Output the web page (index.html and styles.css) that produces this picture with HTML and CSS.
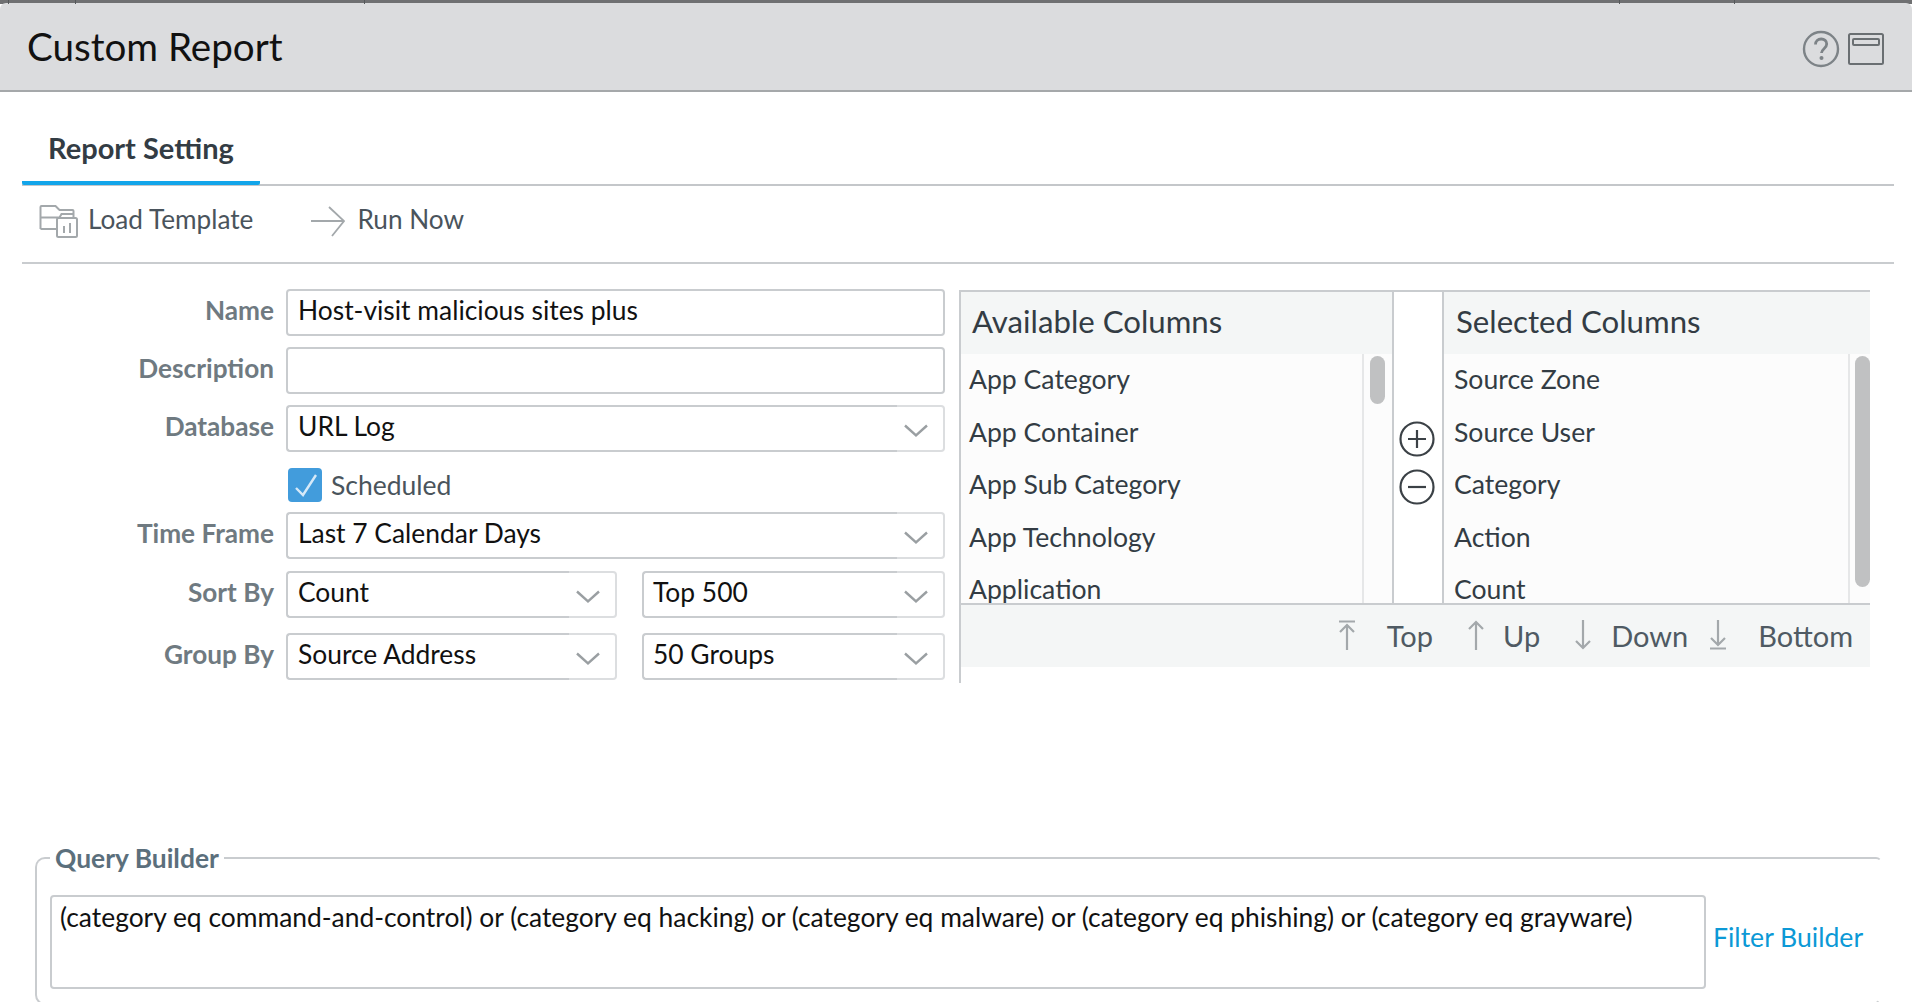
FILE: index.html
```html
<!DOCTYPE html>
<html lang="en">
<head>
  <meta charset="UTF-8" />
  <title>Custom Report</title>
  <link rel="stylesheet" href="styles.css">
</head>
<body>

  <div class="backdrop">
    <span class="seg seg-a"></span>
    <span class="seg seg-b"></span>
    <span class="seg seg-c"></span>
    <span class="seg seg-d"></span>
    <span class="seg seg-e"></span>
  </div>

  <header class="title-bar">
    <h1>Custom Report</h1>
    <div class="title-tools">
      <svg class="help-icon" width="38" height="38" viewBox="0 0 38 38">
        <circle cx="19" cy="19" r="17" fill="none" stroke="#7d8387" stroke-width="2.400"/>
        <path d="M13.500 14.500c0-3.500 2.500-5.500 5.700-5.500 3.200 0 5.500 2 5.500 5 0 4.500-5.200 4.800-5.200 9" fill="none" stroke="#7d8387" stroke-width="2.800"/>
        <circle cx="19.500" cy="28" r="2" fill="#7d8387"/>
      </svg>
      <svg class="window-icon" width="36" height="32" viewBox="0 0 36 32">
        <rect x="1" y="1" width="34" height="30" rx="1.500" fill="none" stroke="#6a6f72" stroke-width="2"/>
        <rect x="5" y="6" width="26" height="6" rx="1" fill="none" stroke="#6a6f72" stroke-width="2"/>
      </svg>
    </div>
  </header>

  <nav class="tabs">
    <a class="tab active">Report Setting</a>
  </nav>

  <div class="toolbar">
    <a class="tool tool-load">
      <svg width="40" height="34" viewBox="0 0 40 34">
        <path d="M1.500 25V3q0-1 1-1h14l4 4h13q1 0 1 1v7" fill="none" stroke="#a3a8ab" stroke-width="2"/>
        <path d="M1.500 13.500h19l2-3.500h12" fill="none" stroke="#a3a8ab" stroke-width="2"/>
        <path d="M1.500 25h16" fill="none" stroke="#a3a8ab" stroke-width="2"/>
        <rect x="18" y="14" width="20" height="19" rx="1.500" fill="#fff" stroke="#a3a8ab" stroke-width="2"/>
        <path d="M25 22v7M31 19v10" stroke="#a3a8ab" stroke-width="2"/>
      </svg>
      Load Template
    </a>
    <a class="tool tool-run">
      <svg width="36" height="32" viewBox="0 0 36 32">
        <path d="M1 16h33M19 2l15 14-12 15" fill="none" stroke="#a3a8ab" stroke-width="1.800"/>
      </svg>
      Run Now
    </a>
  </div>

  <main class="settings">
    <form class="report-form">
      <label class="field-label">Name</label>
      <div class="text-box">Host-visit malicious sites plus</div>

      <label class="field-label">Description</label>
      <div class="text-box"></div>

      <label class="field-label">Database</label>
      <div class="select">
        <div class="select-value">URL Log</div>
        <div class="select-arrow"><svg width="24" height="14" viewBox="0 0 24 14"><path d="M1 1.500l11 10 11-10" fill="none" stroke="#9a9fa2" stroke-width="2.400"/></svg></div>
      </div>

      <span></span>
      <div class="check-row">
        <span class="checkbox"><svg width="34" height="34" viewBox="0 0 34 34"><path d="M8 20l7 7L28 7" fill="none" stroke="#d6e9f8" stroke-width="2.400"/></svg></span>
        Scheduled
      </div>

      <label class="field-label">Time Frame</label>
      <div class="select">
        <div class="select-value">Last 7 Calendar Days</div>
        <div class="select-arrow"><svg width="24" height="14" viewBox="0 0 24 14"><path d="M1 1.500l11 10 11-10" fill="none" stroke="#9a9fa2" stroke-width="2.400"/></svg></div>
      </div>

      <label class="field-label">Sort By</label>
      <div class="select-pair">
        <div class="select">
          <div class="select-value">Count</div>
          <div class="select-arrow"><svg width="24" height="14" viewBox="0 0 24 14"><path d="M1 1.500l11 10 11-10" fill="none" stroke="#9a9fa2" stroke-width="2.400"/></svg></div>
        </div>
        <div class="select">
          <div class="select-value">Top 500</div>
          <div class="select-arrow"><svg width="24" height="14" viewBox="0 0 24 14"><path d="M1 1.500l11 10 11-10" fill="none" stroke="#9a9fa2" stroke-width="2.400"/></svg></div>
        </div>
      </div>

      <label class="field-label">Group By</label>
      <div class="select-pair">
        <div class="select">
          <div class="select-value">Source Address</div>
          <div class="select-arrow"><svg width="24" height="14" viewBox="0 0 24 14"><path d="M1 1.500l11 10 11-10" fill="none" stroke="#9a9fa2" stroke-width="2.400"/></svg></div>
        </div>
        <div class="select">
          <div class="select-value">50 Groups</div>
          <div class="select-arrow"><svg width="24" height="14" viewBox="0 0 24 14"><path d="M1 1.500l11 10 11-10" fill="none" stroke="#9a9fa2" stroke-width="2.400"/></svg></div>
        </div>
      </div>
    </form>

    <section class="columns">
      <div class="columns-main">
        <div class="col col-available">
          <h2>Available Columns</h2>
          <div class="col-body">
            <ul>
              <li>App Category</li>
              <li>App Container</li>
              <li>App Sub Category</li>
              <li>App Technology</li>
              <li>Application</li>
            </ul>
            <div class="scroll-track"><div class="thumb thumb-short"></div></div>
          </div>
        </div>

        <div class="col-actions">
          <svg width="36" height="36" viewBox="0 0 36 36">
            <circle cx="18" cy="18" r="16.500" fill="none" stroke="#3b4146" stroke-width="2.200"/>
            <path d="M18 9v18M9 18h18" stroke="#3b4146" stroke-width="2.200"/>
          </svg>
          <svg width="36" height="36" viewBox="0 0 36 36">
            <circle cx="18" cy="18" r="16.500" fill="none" stroke="#3b4146" stroke-width="2.200"/>
            <path d="M9 18h18" stroke="#3b4146" stroke-width="2.200"/>
          </svg>
        </div>

        <div class="col col-selected">
          <h2>Selected Columns</h2>
          <div class="col-body">
            <ul>
              <li>Source Zone</li>
              <li>Source User</li>
              <li>Category</li>
              <li>Action</li>
              <li>Count</li>
            </ul>
            <div class="scroll-track"><div class="thumb thumb-long"></div></div>
          </div>
        </div>
      </div>

      <div class="columns-foot">
        <a class="move move-top">
          <svg width="20" height="30" viewBox="0 0 20 30"><path d="M2 1.500h16M10 30V5M3 12l7-7 7 7" fill="none" stroke="#a3a8ab" stroke-width="2.200"/></svg>
          Top
        </a>
        <a class="move move-up">
          <svg width="18" height="30" viewBox="0 0 18 30"><path d="M9 30V2M2 9l7-7 7 7" fill="none" stroke="#a3a8ab" stroke-width="2.200"/></svg>
          Up
        </a>
        <a class="move move-down">
          <svg width="18" height="30" viewBox="0 0 18 30"><path d="M9 0v28M2 21l7 7 7-7" fill="none" stroke="#a3a8ab" stroke-width="2.200"/></svg>
          Down
        </a>
        <a class="move move-bottom">
          <svg width="20" height="30" viewBox="0 0 20 30"><path d="M10 0v25M3 18l7 7 7-7M2 28.500h16" fill="none" stroke="#a3a8ab" stroke-width="2.200"/></svg>
          Bottom
        </a>
      </div>
    </section>
  </main>

  <fieldset class="query-builder">
    <legend>Query Builder</legend>
    <div class="query-row">
      <div class="query-box">(category eq command-and-control) or (category eq hacking) or (category eq malware) or (category eq phishing) or (category eq grayware)</div>
      <a class="filter-link">Filter Builder</a>
    </div>
  </fieldset>

</body>
</html>
```

FILE: styles.css
```css
* {
  box-sizing: border-box;
}

html, body {
  height: 1002px;
  overflow: hidden;
}

body {
  margin: 0;
  font-family: Lato, "Open Sans", sans-serif;
  background-color: #fff;
  color: #111;
}

/* strip of the page behind the dialog */
.backdrop {
  display: flex;
  height: 4px;
  background-color: #6f7072;
}

.seg {
  height: 4px;
  border-right: 1px solid #55585a;
}

.seg-a { width: 9px; }
.seg-b { width: 67px; }
.seg-c { width: 289px; }
.seg-d { width: 1255px; }
.seg-e { width: 115px; }

.title-bar {
  display: flex;
  align-items: center;
  justify-content: space-between;
  height: 89px;
  margin-top: -1px;
  padding: 0 27px 2px;
  background-color: #dbdcde;
  border-bottom: 2px solid #a5a8aa;
  border-radius: 6px 6px 0 0;
}

h1 {
  margin: 0;
  font-size: 38.6px;
  font-weight: 400;
  color: #111;
}

.title-tools {
  display: flex;
  align-items: flex-start;
  gap: 8px;
  margin-top: 6px;
  margin-right: 1px;
}

.window-icon {
  margin-top: 3px;
}

.tabs {
  display: flex;
  height: 94px;
  margin: 0 18px 0 22px;
  border-bottom: 2px solid #c4c7ca;
}

.tab {
  display: flex;
  align-items: center;
  width: 238px;
  height: 93px;
  padding: 22px 0 0 26px;
  font-size: 29px;
  font-weight: 700;
  color: #333c44;
  border-bottom: 4px solid #12a5ea;
  border-radius: 0 0 2px 2px;
}

.toolbar {
  display: flex;
  align-items: center;
  height: 78px;
  margin: 0 18px 0 22px;
  padding: 0 0 10px 17px;
  border-bottom: 2px solid #c9cccf;
  font-size: 26.2px;
  color: #4a545c;
}

.tool {
  display: flex;
  align-items: center;
}

.tool-load svg {
  margin-top: 3px;
  margin-right: 9px;
}

.tool-run {
  margin-left: 57px;
}

.tool-run svg {
  margin-top: 4px;
  margin-right: 11px;
}

.settings {
  display: flex;
  align-items: flex-start;
  padding-top: 25px;
  height: 418px;
}

.report-form {
  display: grid;
  grid-template-columns: 274px 659px;
  grid-template-rows: 58px 58px 64px 43px 59px 62px 47px;
  column-gap: 12px;
  flex: none;
  width: 945px;
}

.field-label {
  height: 47px;
  line-height: 43px;
  text-align: right;
  font-size: 26.2px;
  font-weight: 700;
  color: #6f7a81;
}

.text-box,
.select-value {
  height: 47px;
  padding: 0 10px;
  line-height: 39px;
  font-size: 26.4px;
  color: #111;
  background-color: #fff;
  border: 2px solid #c9cccf;
  border-radius: 4px;
}

.select {
  display: flex;
  height: 47px;
}

.select-value {
  flex: 1;
  min-width: 0;
  border-right: none;
  border-radius: 4px 0 0 4px;
}

.select + .select .select-value {
  padding-left: 9px;
}

.select-arrow {
  display: flex;
  align-items: center;
  justify-content: center;
  flex: none;
  width: 48px;
  height: 47px;
  padding: 4px 9px 0 0;
  border: 2px solid #dcdee0;
  border-left: none;
  border-radius: 0 4px 4px 0;
}

.select-pair {
  display: grid;
  grid-template-columns: 331px 303px;
  column-gap: 25px;
}

.check-row {
  display: flex;
  align-items: center;
  gap: 9px;
  height: 34px;
  margin-top: -1px;
  margin-left: 2px;
  font-size: 26.5px;
  color: #4a545c;
}

.checkbox {
  display: block;
  width: 34px;
  height: 34px;
  background-color: #429cdc;
  border-radius: 4px;
}

.checkbox svg {
  display: block;
}

.columns {
  flex: none;
  width: 911px;
  height: 393px;
  margin-left: 14px;
  margin-top: 1px;
  border-left: 2px solid #c9cccf;
}

.columns-main {
  display: flex;
  height: 315px;
  border-top: 2px solid #c9cccf;
  border-bottom: 2px solid #c9cccf;
}

.col {
  display: flex;
  flex-direction: column;
}

.col-available {
  width: 431px;
}

.col-selected {
  flex: 1;
  min-width: 0;
}

.col h2 {
  flex: none;
  height: 62px;
  margin: 0;
  padding-left: 11px;
  line-height: 59px;
  font-size: 31.2px;
  font-weight: 400;
  color: #333c44;
  background-color: #f4f6f6;
}

.col-selected h2 {
  padding-left: 12px;
}

.col-body {
  display: flex;
  height: 249px;
  overflow: hidden;
  background-color: #fcfcfc;
}

.col-body ul {
  flex: 1;
  margin: 0;
  padding: 0 0 0 8px;
  list-style: none;
}

.col-selected ul {
  padding-left: 10px;
}

.col-body li {
  height: 52.500px;
  line-height: 50px;
  font-size: 26.6px;
  color: #333c44;
  white-space: nowrap;
}

.scroll-track {
  flex: none;
  width: 30px;
  padding: 2px 9px 0 6px;
  border-left: 2px solid #e6e7e8;
}

.col-selected .scroll-track {
  width: 22px;
  padding-left: 5px;
  padding-right: 0;
}

.thumb {
  width: 15px;
  background-color: #c0c1c2;
  border-radius: 8px;
}

.thumb-short { height: 48px; }
.thumb-long { height: 231px; }

.col-actions {
  display: flex;
  flex-direction: column;
  align-items: center;
  gap: 12px;
  flex: none;
  width: 52px;
  padding-top: 129px;
  border-left: 2px solid #c9cccf;
  border-right: 2px solid #c9cccf;
}

.col-actions svg {
  display: block;
  margin-left: -3px;
}

.columns-foot {
  display: flex;
  align-items: center;
  justify-content: flex-end;
  height: 62px;
  padding: 0 17px 2px 0;
  font-size: 29px;
  color: #4f5a63;
  background-color: #f4f6f6;
}

.move {
  display: flex;
  align-items: center;
}

.move-top svg { margin-right: 30px; }
.move-up { margin-left: 34px; }
.move-up svg { margin-right: 18px; }
.move-down { margin-left: 34px; }
.move-down svg { margin-right: 19px; }
.move-bottom { margin-left: 20px; }
.move-bottom svg { margin-right: 30px; }

.query-builder {
  display: block;
  height: 163px;
  margin: 160px 30px 0 35px;
  padding: 0;
  min-width: 0;
  border: 2px solid #c9cccf;
  border-right-color: transparent;
  border-radius: 10px 6px 10px 10px;
}

legend {
  margin-left: 13px;
  padding: 0 5px;
  font-size: 26.4px;
  font-weight: 700;
  color: #5b6f7c;
}

.query-row {
  display: flex;
  align-items: center;
  margin-top: 21px;
  padding-left: 13px;
}

.query-box {
  flex: none;
  width: 1656px;
  height: 94px;
  padding: 1px 8px;
  font-size: 26.4px;
  line-height: 38px;
  color: #111;
  white-space: nowrap;
  border: 2px solid #c9cccf;
  border-radius: 4px;
}

.filter-link {
  margin-top: -10px;
  margin-left: 7px;
  font-size: 26.6px;
  color: #0c99d6;
}
```
